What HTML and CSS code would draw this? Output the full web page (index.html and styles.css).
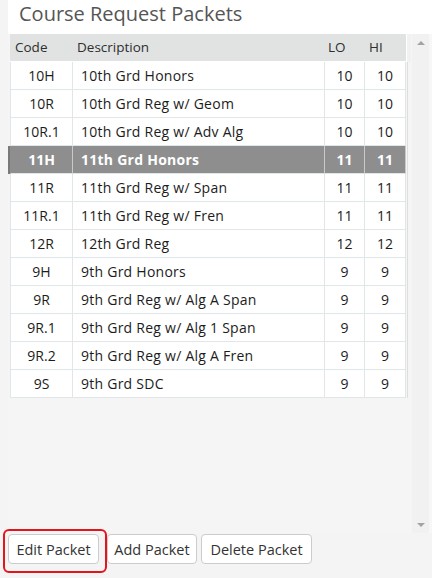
FILE: index.html
```html
<!DOCTYPE html>
<html lang="en">
<head>
<meta charset="utf-8">
<title>Course Request Packets</title>
<link rel="stylesheet" href="styles.css">
</head>
<body>
<div class="panel">
  <div class="title">Course Request Packets</div>
  <div class="grid">
    <div class="pane">
      <div class="grid-header">
        <div class="hcell first">Code</div>
        <div class="hcell">Description</div>
        <div class="hcell narrow">LO</div>
        <div class="hcell">HI</div>
      </div>
      <div class="grid-body">
        <div class="row"><div class="cell code">10H</div><div class="cell desc">10th Grd Honors</div><div class="cell num">10</div><div class="cell num">10</div></div>
        <div class="row"><div class="cell code">10R</div><div class="cell desc">10th Grd Reg w/ Geom</div><div class="cell num">10</div><div class="cell num">10</div></div>
        <div class="row"><div class="cell code">10R.1</div><div class="cell desc">10th Grd Reg w/ Adv Alg</div><div class="cell num">10</div><div class="cell num">10</div></div>
        <div class="row selected"><div class="cell code">11H</div><div class="cell desc">11th Grd Honors</div><div class="cell num">11</div><div class="cell num">11</div></div>
        <div class="row"><div class="cell code">11R</div><div class="cell desc">11th Grd Reg w/ Span</div><div class="cell num">11</div><div class="cell num">11</div></div>
        <div class="row"><div class="cell code">11R.1</div><div class="cell desc">11th Grd Reg w/ Fren</div><div class="cell num">11</div><div class="cell num">11</div></div>
        <div class="row"><div class="cell code">12R</div><div class="cell desc">12th Grd Reg</div><div class="cell num">12</div><div class="cell num">12</div></div>
        <div class="row"><div class="cell code">9H</div><div class="cell desc">9th Grd Honors</div><div class="cell num">9</div><div class="cell num">9</div></div>
        <div class="row"><div class="cell code">9R</div><div class="cell desc">9th Grd Reg w/ Alg A Span</div><div class="cell num">9</div><div class="cell num">9</div></div>
        <div class="row"><div class="cell code">9R.1</div><div class="cell desc">9th Grd Reg w/ Alg 1 Span</div><div class="cell num">9</div><div class="cell num">9</div></div>
        <div class="row"><div class="cell code">9R.2</div><div class="cell desc">9th Grd Reg w/ Alg A Fren</div><div class="cell num">9</div><div class="cell num">9</div></div>
        <div class="row"><div class="cell code">9S</div><div class="cell desc">9th Grd SDC</div><div class="cell num">9</div><div class="cell num">9</div></div>
      </div>
    </div>
    <div class="scrollbar">
      <span class="arrow up"></span>
      <span class="arrow down"></span>
    </div>
    <div class="edge"></div>
  </div>
  <div class="buttons">
    <button class="btn btn-edit">Edit Packet</button>
    <button class="btn btn-add">Add Packet</button>
    <button class="btn btn-delete">Delete Packet</button>
    <div class="highlight"></div>
  </div>
</div>
</body>
</html>
```
FILE: styles.css
```css
* { box-sizing: border-box; }

html, body {
  margin: 0;
  padding: 0;
}

body {
  background: #f4f4f4;
  font-family: "Open Sans", "Liberation Sans", sans-serif;
  color: #1c1c1c;
  width: 432px;
  height: 578px;
  overflow: hidden;
}

.panel {
  margin-left: 8px;
  width: 424px;
}

.title {
  background: #ffffff;
  height: 34px;
  padding-left: 11px;
  font-size: 20px;
  line-height: 27px;
  color: #555555;
  white-space: nowrap;
}

.grid {
  display: flex;
  height: 499px;
  padding-left: 2px;
  background: #f5f5f5;
}

.pane {
  width: 401px;
  display: flex;
  flex-direction: column;
}

.grid-header {
  width: 396px;
  height: 28px;
  display: grid;
  grid-template-columns: 63px 252px 40px 41px;
  background: #e1e3e3;
  border-bottom: 1px solid #ffffff;
  box-shadow: 1px 0 0 #ffffff, 5px 0 0 #f1f1f1;
  font-size: 13.5px;
  line-height: 27px;
  color: #2e2e2e;
}

.hcell {
  padding-left: 4px;
  white-space: nowrap;
}

.hcell.first { padding-left: 5px; }
.hcell.narrow { padding-left: 3px; }

.grid-body {
  width: 398px;
  border-right: 1px solid #dedede;
}

.row {
  display: grid;
  grid-template-columns: 63px 252px 40px 41px;
  width: 396px;
  height: 28px;
  background: #ffffff;
  font-size: 14px;
  line-height: 27px;
}

.cell {
  border-right: 1px solid #dfe7eb;
  border-bottom: 1px solid #dfe7eb;
  white-space: nowrap;
  overflow: hidden;
}

.cell.code {
  border-left: 1px solid #dfe7eb;
  text-align: center;
}

.cell.desc {
  padding-left: 8px;
  letter-spacing: 0.25px;
}

.cell.num { text-align: center; }

.row.selected {
  background: #8e8e8e;
  color: #ffffff;
  font-weight: 700;
}

.row.selected .cell {
  border-right-color: #c9c9c9;
}

.row.selected .cell.code {
  border-left-color: #8e8e8e;
  box-shadow: -2px 0 0 #7a7a7a;
}

.scrollbar {
  margin-left: 1px;
  width: 17px;
  height: 499px;
  background: #f1f1f1;
  display: flex;
  flex-direction: column;
  justify-content: space-between;
  align-items: center;
  padding: 7px 0 6px;
}

.arrow {
  display: block;
  width: 0;
  height: 0;
  border-left: 4px solid transparent;
  border-right: 4px solid transparent;
}

.arrow.up { border-bottom: 4px solid #a3a3a3; }
.arrow.down { border-top: 4px solid #a3a3a3; }

.edge {
  flex: 1;
  background: #f7f7f7;
}

.buttons {
  position: relative;
  display: flex;
  margin-top: 1px;
}

.btn {
  height: 30px;
  padding: 0;
  background: #ffffff;
  border: 1px solid #cccccc;
  border-radius: 4px;
  font-family: "Open Sans", "Liberation Sans", sans-serif;
  font-size: 14.5px;
  color: #333333;
  text-align: center;
}

.btn-edit { width: 91px; margin-right: 8px; }
.btn-add { width: 90px; margin-right: 4px; }
.btn-delete { width: 111px; }

.highlight {
  position: absolute;
  left: -5px;
  top: -5px;
  width: 104px;
  height: 44px;
  border: 2px solid #e3141c;
  border-radius: 6px;
  pointer-events: none;
}
```
